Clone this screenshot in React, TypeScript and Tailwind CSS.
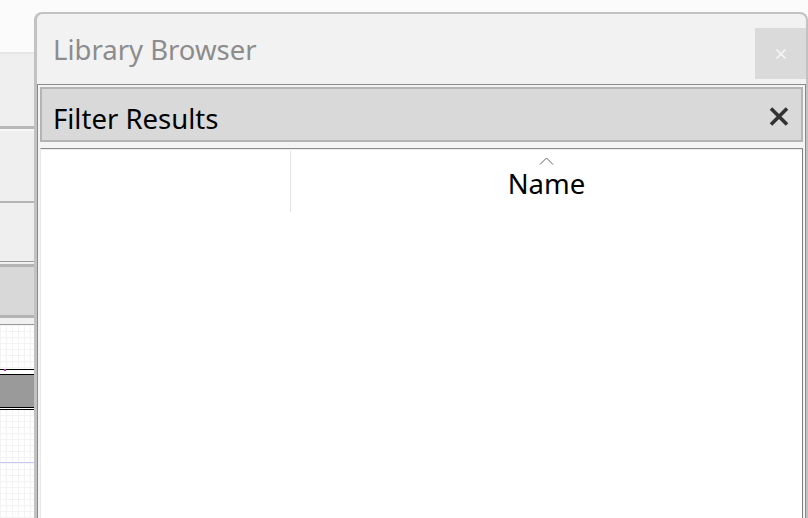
import React from "react";

export default function App() {
  return (
    <div className="relative w-[808px] h-[518px] overflow-hidden bg-white font-['Noto_Sans',sans-serif]">
      {/* background application */}
      <div className="flex flex-col w-full h-full">
        <div className="h-[52px] bg-[#fbfbfb] shrink-0" />
        <div className="h-[2px] bg-[#e6e6e6] shrink-0" />
        <div className="h-[72px] bg-[#efefef] shrink-0" />
        <div className="h-[3px] bg-[#b8b8b8] shrink-0" />
        <div className="h-[72px] bg-[#efefef] border-t-2 border-[#f8f8f8] shrink-0" />
        <div className="h-[2px] bg-[#b5b5b5] shrink-0" />
        <div className="h-[58px] bg-[#efefef] shrink-0" />
        <div className="h-px bg-[#9a9a9a] shrink-0" />
        <div className="h-[2px] bg-[#efefef] shrink-0" />
        <div className="h-[3px] bg-[#b4b4b4] shrink-0" />
        <div className="h-[48px] bg-[#d8d8d8] shrink-0" />
        <div className="h-[3px] bg-[#b4b4b4] shrink-0" />
        <div className="h-[6px] bg-[#f0f0f0] shrink-0" />
        <div className="h-px bg-[#9a9a9a] shrink-0" />
        <div className="flex-1 flex flex-col bg-white bg-[linear-gradient(to_right,#f3f3f3_1px,transparent_1px),linear-gradient(to_bottom,#f3f3f3_1px,transparent_1px)] bg-[size:6px_6px]">
          <div className="h-[44px] shrink-0" />
          <div className="h-px bg-black shrink-0" />
          <div className="h-[4px] bg-white shrink-0 relative">
            <div className="absolute left-[4px] -top-[1px] w-[2px] h-[2px] bg-[#d020d0]" />
          </div>
          <div className="h-px bg-black shrink-0" />
          <div className="h-[32px] bg-[#9a9a9a] shrink-0" />
          <div className="h-px bg-black shrink-0" />
          <div className="h-px bg-white shrink-0" />
          <div className="h-px bg-black shrink-0" />
          <div className="h-[52px] shrink-0" />
          <div className="h-px bg-[#c8c8f4] shrink-0" />
        </div>
      </div>

      {/* floating window */}
      <div className="absolute left-[34px] top-[12px] w-[774px] h-[530px] flex flex-col bg-[#f2f2f2] border-t-2 border-l-[3px] border-r-2 border-[#c2c2c2] rounded-t-[8px]">
        {/* title bar */}
        <div className="h-[70px] shrink-0 flex justify-between">
          <div className="pl-[16px] pt-[17px] text-[27.5px] leading-[38px] text-[#8c8c8c] whitespace-nowrap">
            Library Browser
          </div>
          <div className="mt-[14px] w-[51px] h-[51px] bg-[#dadada] flex items-center justify-center">
            <svg width="12" height="12" viewBox="0 0 12 12">
              <path d="M1.5 1.5 L10.5 10.5 M10.5 1.5 L1.5 10.5" stroke="#f6f6f6" strokeWidth="1.6" fill="none" />
            </svg>
          </div>
        </div>

        {/* panel */}
        <div className="flex-1 flex flex-col p-[2px] bg-[#f4f4f4] border-t border-x border-[#8a8a8a]">
          <div className="h-[55px] shrink-0 flex justify-between border-2 border-[#b4b4b4] bg-[#d9d9d9]">
            <div className="pl-[11px] pt-[11px] text-[27.5px] leading-[38px] text-black whitespace-nowrap">
              Filter Results
            </div>
            <div className="mr-[12px] mt-[18px]">
              <svg width="20" height="19" viewBox="0 0 20 19">
                <path d="M2 1.5 L18 17.5 M18 1.5 L2 17.5" stroke="#333333" strokeWidth="3.6" fill="none" />
              </svg>
            </div>
          </div>
          <div className="h-[6px] shrink-0" />
          <div className="flex-1 bg-white border-t border-t-[#8c8c8c] border-r border-r-[#7f7f7f] border-l border-l-[#e8e8e8]">
            <div className="border-t border-[#ececec] flex">
              <div className="w-[250px] h-[61px] mt-px border-r border-[#e2e2e2]" />
              <div className="flex-1 flex flex-col items-center pt-[7px]">
                <svg width="15" height="8" viewBox="0 0 15 8">
                  <path d="M1 7.5 L7.5 1 L14 7.5" stroke="#606060" strokeWidth="1" fill="none" />
                </svg>
                <div className="mt-[4px] text-[27.5px] leading-[30px] text-black">Name</div>
              </div>
            </div>
          </div>
        </div>
      </div>
    </div>
  );
}
